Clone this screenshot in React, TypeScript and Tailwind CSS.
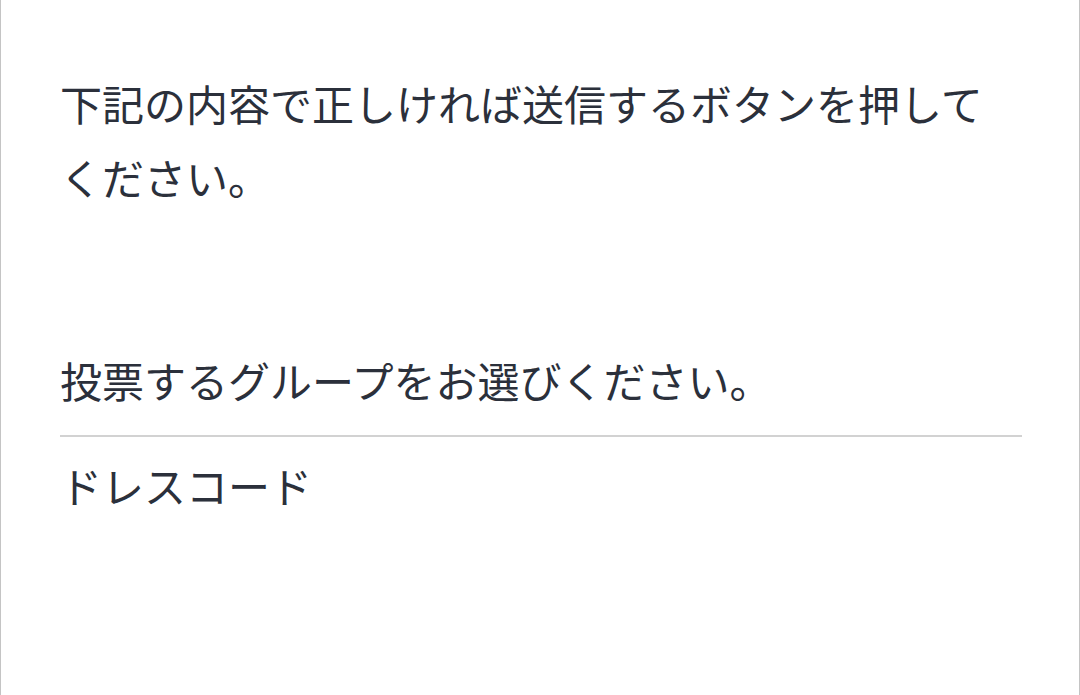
import React from 'react';

export default function App() {
  return (
    <div className="w-[1080px] h-[695px] overflow-hidden bg-white border-x border-[#c4c4c4] text-[#2b303b]" style={{ fontFamily: '"Noto Sans CJK JP", "Noto Sans", sans-serif' }}>
      <div className="pl-[59px] pr-[57px] pt-[66px]">
        <p className="text-[42px] leading-[74px]">
          下記の内容で正しければ送信するボタンを押してください。
        </p>

        <div className="mt-[136px]">
          <p className="text-[42px] leading-[60px] pb-[25px] border-b-2 border-[#d2d2d2]">投票するグループをお選びください。</p>
          <p className="text-[42px] leading-[60px] pt-[18px]">ドレスコード</p>
        </div>
      </div>
    </div>
  );
}
